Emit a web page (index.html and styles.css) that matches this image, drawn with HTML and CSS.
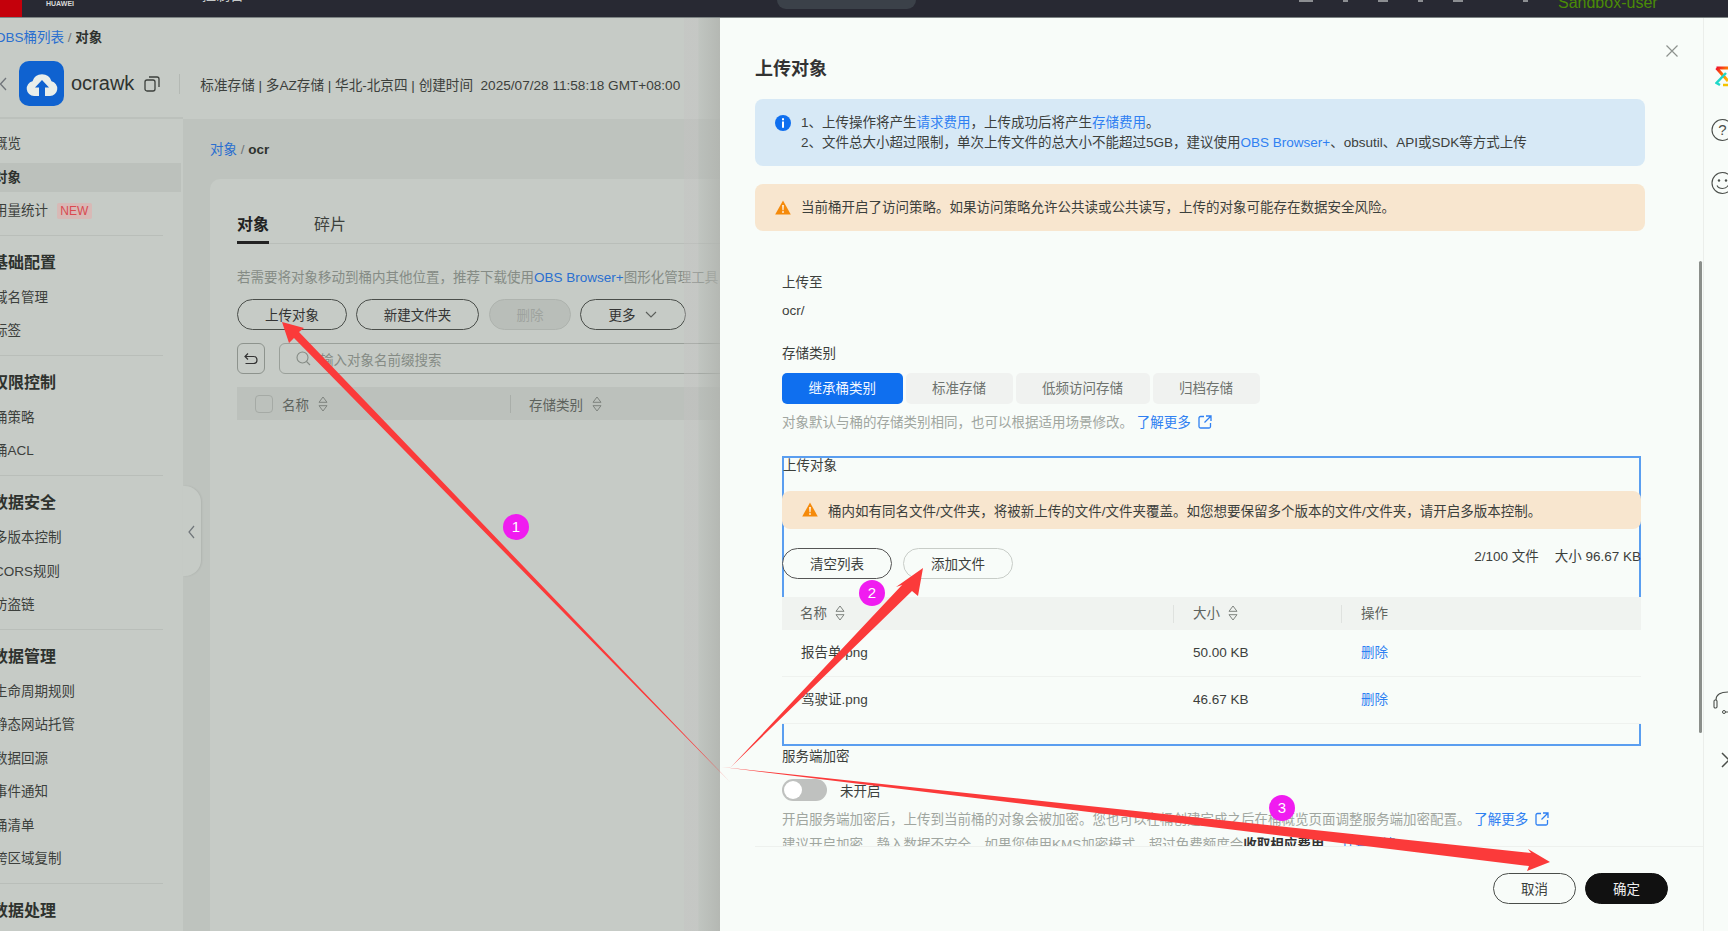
FILE: index.html
```html
<!DOCTYPE html>
<html>
  <head>
    <meta name="viewport" content="width=device-width,initial-scale=1.0">
    <title>上传对象</title>
    <link rel="stylesheet" href="styles.css">
  </head>
  <body>
    <svg class="defs" width="0" height="0">
      <symbol id="sort" viewBox="0 0 10 16">
        <path d="M5 1 9 6.300H1Z M1 9.700H9L5 15Z" fill="none" stroke="currentColor" stroke-width="1" stroke-linejoin="round"/>
      </symbol>
      <symbol id="ext" viewBox="0 0 14 14">
        <path d="M6 1.5H2.5A1.5 1.5 0 0 0 1 3V11.5A1.5 1.5 0 0 0 2.5 13H11A1.5 1.5 0 0 0 12.500 11.5V8M8 1H13V6M13 1 6.500 7.500" fill="none" stroke="currentColor" stroke-width="1.300"/>
      </symbol>
      <symbol id="warn" viewBox="0 0 16 15">
        <path d="M8 .5 15.800 14.500H.2Z" fill="#f58a0b"/>
        <path d="M7.200 5H8.800L8.500 10.300H7.500ZM7.200 11.300H8.800V12.800H7.200Z" fill="#fff"/>
      </symbol>
    </svg>

    <header class="topbar">
      <div class="brand-red"></div>
      <span class="brand-name">HUAWEI</span>
      <span class="top-nav">控制台</span>
      <div class="top-search"></div>
      <div class="top-tools">
        <i class="tick wide"></i><i class="tick"></i><i class="tick mid"></i><i class="tick"></i><i class="tick mid"></i><i class="tick far"></i>
      </div>
      <span class="top-user">Sandbox-user</span>
    </header>

    <div class="main">
      <div class="console">
        <div class="crumbs"><a>OBS桶列表</a> <span class="slash">/</span> <b>对象</b></div>
        <div class="bucket">
          <svg class="back" width="8" height="14" viewBox="0 0 8 14"><path d="M7 1 1.500 7 7 13" fill="none" stroke="currentColor" stroke-width="1.300"/></svg>
          <div class="bucket-logo">
            <svg width="32" height="26" viewBox="0 0 32 26">
              <path d="M8 25A7.500 7.500 0 0 1 6.500 10.200 10 10 0 0 1 25.500 10.200 7.500 7.500 0 0 1 24 25Z" fill="#e9eeea"/>
              <path d="M16 9 23 16.500H19V25H13V16.500H9Z" fill="#0f62d0"/>
            </svg>
          </div>
          <span class="bucket-name">ocrawk</span>
          <svg class="copy" width="16" height="16" viewBox="0 0 16 16"><rect x="1" y="4" width="10" height="11" rx="2" fill="none" stroke="currentColor" stroke-width="1.300"/><path d="M5 1H13A2 2 0 0 1 15 3V11" fill="none" stroke="currentColor" stroke-width="1.300"/></svg>
          <span class="bucket-sep"></span>
          <span class="bucket-meta">标准存储 | 多AZ存储 | 华北-北京四 | 创建时间&nbsp; 2025/07/28 11:58:18 GMT+08:00</span>
        </div>

        <div class="workspace">
          <nav class="sidebar">
            <div class="nav-group first">
              <a class="nav-item">概览</a>
              <a class="nav-item active">对象</a>
              <a class="nav-item">用量统计 <span class="new">NEW</span></a>
            </div>
            <div class="nav-group">
              <h4>基础配置</h4>
              <a class="nav-item">域名管理</a>
              <a class="nav-item">标签</a>
            </div>
            <div class="nav-group">
              <h4>权限控制</h4>
              <a class="nav-item">桶策略</a>
              <a class="nav-item">桶ACL</a>
            </div>
            <div class="nav-group">
              <h4>数据安全</h4>
              <a class="nav-item">多版本控制</a>
              <a class="nav-item">CORS规则</a>
              <a class="nav-item">防盗链</a>
            </div>
            <div class="nav-group">
              <h4>数据管理</h4>
              <a class="nav-item">生命周期规则</a>
              <a class="nav-item">静态网站托管</a>
              <a class="nav-item">数据回源</a>
              <a class="nav-item">事件通知</a>
              <a class="nav-item">桶清单</a>
              <a class="nav-item">跨区域复制</a>
            </div>
            <div class="nav-group last">
              <h4>数据处理</h4>
            </div>
            <div class="collapse">
              <svg width="7" height="14" viewBox="0 0 7 14"><path d="M6 1 1 7 6 13" fill="none" stroke="currentColor" stroke-width="1.200"/></svg>
            </div>
          </nav>

          <section class="content">
            <div class="content-crumbs"><a>对象</a> <span class="slash">/</span> <b>ocr</b></div>
            <div class="card">
              <div class="tabs">
                <span class="tab on">对象</span>
                <span class="tab">碎片</span>
              </div>
              <p class="hint">若需要将对象移动到桶内其他位置，推荐下载使用<a>OBS Browser+</a>图形化管理工具，</p>
              <div class="actions">
                <button class="btn upload">上传对象</button>
                <button class="btn folder">新建文件夹</button>
                <button class="btn off">删除</button>
                <button class="btn more">更多
                  <svg width="12" height="7" viewBox="0 0 12 7"><path d="M1 1 6 6 11 1" fill="none" stroke="currentColor" stroke-width="1.100"/></svg>
                </button>
              </div>
              <div class="search-row">
                <button class="undo">
                  <svg width="14" height="14" viewBox="0 0 14 14"><path d="M4 1.500 1 4.500 4 7.500M1 4.500H9.500A3.500 3.500 0 0 1 9.500 11.500H1.500" fill="none" stroke="currentColor" stroke-width="1.200"/></svg>
                </button>
                <div class="search">
                  <svg width="15" height="15" viewBox="0 0 15 15"><circle cx="6.500" cy="6.500" r="5.500" fill="none" stroke="currentColor" stroke-width="1.100"/><path d="M10.500 10.500 14 14" stroke="currentColor" stroke-width="1.100"/></svg>
                  <span>输入对象名前缀搜索</span>
                </div>
              </div>
              <div class="obj-head">
                <span class="check"></span>
                <span class="obj-name">名称</span>
                <svg class="sort" width="10" height="16"><use href="#sort"/></svg>
                <span class="obj-sep"></span>
                <span>存储类别</span>
                <svg class="sort" width="10" height="16"><use href="#sort"/></svg>
              </div>
            </div>
          </section>
        </div>
      </div>

      <aside class="drawer">
        <div class="drawer-main">
          <svg class="close" width="12" height="12" viewBox="0 0 12 12"><path d="M.5 .5 11.500 11.500M11.500 .5 .5 11.500" stroke="currentColor" stroke-width="1.200"/></svg>
          <div class="drawer-body">
            <h2>上传对象</h2>
            <div class="alert info">
              <svg class="alert-icon" width="16" height="16" viewBox="0 0 16 16"><circle cx="8" cy="8" r="8" fill="#0f6fef"/><path d="M7 3.200H9V5.200H7ZM7 6.500H9V12.800H7Z" fill="#fff"/></svg>
              <div>
                <div>1、上传操作将产生<a>请求费用</a>，上传成功后将产生<a>存储费用</a>。</div>
                <div>2、文件总大小超过限制，单次上传文件的总大小不能超过5GB，建议使用<a>OBS Browser+</a>、obsutil、API或SDK等方式上传</div>
              </div>
            </div>
            <div class="alert warning">
              <svg class="alert-icon" width="16" height="15"><use href="#warn"/></svg>
              <div>当前桶开启了访问策略。如果访问策略允许公共读或公共读写，上传的对象可能存在数据安全风险。</div>
            </div>

            <div class="form">
              <div class="label first">上传至</div>
              <div class="value">ocr/</div>
              <div class="label gap">存储类别</div>
              <div class="segments">
                <span class="seg on">继承桶类别</span>
                <span class="seg">标准存储</span>
                <span class="seg">低频访问存储</span>
                <span class="seg">归档存储</span>
              </div>
              <div class="help">对象默认与桶的存储类别相同，也可以根据适用场景修改。 <a class="more-link">了解更多 <svg width="14" height="14"><use href="#ext"/></svg></a></div>

              <div class="upload-box">
                <div class="box-title">上传对象</div>
                <div class="box-warning">
                  <svg width="16" height="15"><use href="#warn"/></svg>
                  <span>桶内如有同名文件/文件夹，将被新上传的文件/文件夹覆盖。如您想要保留多个版本的文件/文件夹，请开启多版本控制。</span>
                </div>
                <div class="box-tools">
                  <button class="btn light clear">清空列表</button>
                  <button class="btn light add">添加文件</button>
                  <div class="stats"><span>2/100 文件</span><span>大小 96.67 KB</span></div>
                </div>
                <div class="files">
                  <div class="file-row head">
                    <div>名称 <svg class="sort" width="10" height="16"><use href="#sort"/></svg></div>
                    <div>大小 <svg class="sort" width="10" height="16"><use href="#sort"/></svg></div>
                    <div>操作</div>
                  </div>
                  <div class="file-row">
                    <div>报告单.png</div>
                    <div>50.00 KB</div>
                    <div><a>删除</a></div>
                  </div>
                  <div class="file-row">
                    <div>驾驶证.png</div>
                    <div>46.67 KB</div>
                    <div><a>删除</a></div>
                  </div>
                </div>
              </div>

              <div class="label enc">服务端加密</div>
              <div class="switch-row">
                <span class="switch"></span>
                <span>未开启</span>
              </div>
              <div class="help enc-help">开启服务端加密后，上传到当前桶的对象会被加密。您也可以在桶创建完成之后在桶概览页面调整服务端加密配置。 <a class="more-link">了解更多 <svg width="14" height="14"><use href="#ext"/></svg></a></div>
              <div class="help cut">建议开启加密，静入数据不安全。如果您使用KMS加密模式，超过免费额度会<b>收取相应费用</b>。 <a>计费详情</a></div>
            </div>
          </div>
          <footer class="drawer-foot">
            <button class="btn light cancel">取消</button>
            <button class="btn ok">确定</button>
          </footer>
          <div class="scroll-thumb"></div>
        </div>

        <div class="rail">
          <svg class="rail-logo" width="13" height="21" viewBox="0 0 13 21">
            <defs><linearGradient id="rb" x1="0" y1="0" x2="1" y2="1"><stop offset="0" stop-color="#f0102a"/><stop offset=".5" stop-color="#ff7a00"/><stop offset="1" stop-color="#ffc400"/></linearGradient></defs>
            <path d="M1.500 2H13M1.500 2 13 15" fill="none" stroke="url(#rb)" stroke-width="3"/>
            <path d="M11 7 1.500 17 5 19" fill="none" stroke="#1fd8c8" stroke-width="2.500"/>
            <path d="M8 19H13" stroke="#f5c400" stroke-width="2.500"/>
          </svg>
          <svg class="rail-help" width="18" height="24" viewBox="0 0 18 24"><circle cx="11.500" cy="12" r="10.500" fill="none" stroke="currentColor" stroke-width="1.100"/><text x="11.500" y="17" text-anchor="middle" class="q">?</text></svg>
          <svg class="rail-smile" width="18" height="24" viewBox="0 0 18 24"><circle cx="11.500" cy="12" r="10.500" fill="none" stroke="currentColor" stroke-width="1.100"/><circle cx="8" cy="9.500" r="1.200" fill="currentColor"/><circle cx="15" cy="9.500" r="1.200" fill="currentColor"/><path d="M6 14.500C8 18.500 15 18.500 17 14.500" fill="none" stroke="currentColor" stroke-width="1.100"/></svg>
          <svg class="rail-phone" width="16" height="24" viewBox="0 0 16 24"><path d="M3 10C3 4 8 2 16 2" fill="none" stroke="currentColor" stroke-width="1.100"/><rect x="1" y="10" width="3" height="8" rx="1.200" fill="none" stroke="currentColor" stroke-width="1.100"/><circle cx="11" cy="22" r="1.500" fill="none" stroke="currentColor"/><path d="M12.500 22H16" stroke="currentColor"/></svg>
          <svg class="rail-next" width="9" height="16" viewBox="0 0 9 16"><path d="M1 1 8 8 1 15" fill="none" stroke="currentColor" stroke-width="1.500"/></svg>
        </div>
      </aside>
    </div>

    <!-- annotations drawn over the screenshot -->
    <svg class="marks" width="1728" height="931" viewBox="0 0 1728 931">
      <g fill="#fb3a3a">
        <polygon points="282,322 304,328 299,332 730,782 294,338 289,343"/>
        <polygon points="923,568 918,596 912,591 731,767 902,585 896,587"/>
        <polygon points="1550,862 1527,871 1529,866 722,767 1531,853 1528,849"/>
      </g>
      <g fill="#f01cf0">
        <circle cx="516" cy="527" r="13"/>
        <circle cx="872" cy="593" r="13"/>
        <circle cx="1282" cy="808" r="13"/>
      </g>
      <g class="mark-num" fill="#fff" text-anchor="middle">
        <text x="516" y="532">1</text>
        <text x="872" y="598">2</text>
        <text x="1282" y="813">3</text>
      </g>
    </svg>
  </body>
</html>
```

FILE: styles.css
```css
* { box-sizing: border-box; }
html, body {
  margin: 0;
  height: 931px;
  overflow: hidden;
}
body {
  position: relative;
  font-family: "Liberation Sans", "Noto Sans CJK SC", sans-serif;
  font-size: 13.500px;
  color: #3c403c;
  background: #c6cbc6;
}
a { color: inherit; text-decoration: none; }
button { font-family: inherit; font-size: 13.500px; }
h2, h4, p { margin: 0; }
.defs { position: absolute; }

/* top bar */
.topbar {
  display: flex;
  height: 18px;
  background: #282933;
  border-bottom: 1px solid #7d8484;
  overflow: hidden;
}
.brand-red { width: 22px; height: 18px; background: #c4000b; }
.brand-name {
  width: 30px;
  margin-left: 24px;
  font-size: 7px;
  font-weight: bold;
  line-height: 8px;
  color: #d9d9d9;
}
.top-nav {
  margin: -12px 0 0 126px;
  width: 46px;
  font-size: 14px;
  line-height: 14px;
  color: #c4c8c8;
}
.top-search {
  width: 139px;
  height: 9px;
  margin-left: 529px;
  background: #3b4149;
  border-radius: 0 0 16px 16px;
}
.top-tools {
  display: flex;
  gap: 30px;
  width: 350px;
  margin-left: 383px;
}
.tick { display: block; width: 5px; height: 2px; background: #8c8e92; }
.tick.wide { width: 14px; }
.tick.mid { width: 10px; }
.tick.far { margin-left: 30px; }
.top-user {
  margin: -5px 0 0 -91px;
  font-size: 16px;
  line-height: 16px;
  color: #4a8c06;
}

.main { display: flex; height: 913px; }

/* console behind the drawer */
.console {
  position: relative;
  flex: none;
  width: 720px;
  overflow: hidden;
}
.console::after {
  content: "";
  position: absolute;
  top: 0;
  right: 0;
  bottom: 0;
  width: 36px;
  background: linear-gradient(90deg, rgba(196, 194, 194, .4), rgba(196, 194, 194, .4) 38%, rgba(180, 184, 180, .35) 42%, rgba(176, 179, 174, .8));
  pointer-events: none;
}
.crumbs {
  height: 38px;
  line-height: 39px;
  margin-left: -5px;
  white-space: nowrap;
}
.crumbs a { color: #2a6fd0; }
.crumbs b, .content-crumbs b { font-weight: bold; color: #2e322e; }
.slash { color: #70767a; }
.bucket {
  display: flex;
  align-items: center;
  height: 63px;
  padding-bottom: 8px;
  white-space: nowrap;
}
.back { margin-right: 12px; color: #70757a; margin-left: -1px; }
.bucket-logo {
  display: flex;
  align-items: center;
  justify-content: center;
  width: 45px;
  height: 45px;
  background: #0f62d0;
  border-radius: 10px;
}
.bucket-name { margin-left: 7px; font-size: 20px; color: #2f332f; }
.copy { margin-left: 10px; color: #3c403c; }
.bucket-sep { width: 1px; height: 20px; margin-left: 19px; background: #b4b9b4; }
.bucket-meta { margin-left: 20px; font-size: 13.600px; color: #3c403c; }

.workspace { display: flex; height: 812px; }

/* left menu */
.sidebar {
  position: relative;
  flex: none;
  width: 183px;
  padding-right: 20px;
  box-shadow: 0 -2px 0 #bcc1bc;
}
.nav-group {
  margin-left: -8px;
  padding: 15px 0 9.600px;
  border-bottom: 1px solid #b9beb9;
}
.nav-group.first { padding-top: 10px; }
.nav-group.last { border: 0; }
.nav-group h4 {
  height: 24px;
  margin-bottom: 8px;
  padding-left: 0;
  font-size: 16px;
  line-height: 24px;
  font-weight: bold;
  color: #2e322e;
  white-space: nowrap;
}
.nav-item {
  display: block;
  height: 29px;
  margin: 0 -18px 4.550px 0;
  padding-left: 2px;
  line-height: 29px;
  white-space: nowrap;
}
.nav-item:last-child { margin-bottom: 0; }
.nav-item.active { background: #bcc1bc; font-weight: bold; color: #2e322e; }
.new {
  display: inline-block;
  margin-left: 5px;
  padding: 0 3.500px;
  font-size: 12px;
  line-height: 16px;
  color: #d94a50;
  background: #d8b9b6;
  border-radius: 2px;
}
.collapse {
  position: absolute;
  top: 367px;
  left: 183px;
  display: flex;
  align-items: center;
  width: 18px;
  height: 90px;
  padding: 2px 0 0 5px;
  color: #70767a;
  background: #c6cbc6;
  border-radius: 0 16px 16px 0;
  box-shadow: 1px 0 2px rgba(0, 0, 0, .08);
}

/* main content */
.content {
  flex: 1;
  min-width: 0;
  padding: 0 0 0 27px;
  background: #bec3be;
}
.content-crumbs { height: 60px; line-height: 62px; color: #2e322e; white-space: nowrap; }
.content-crumbs a { color: #2a6fd0; }
.card {
  height: 752px;
  margin-right: -100px;
  padding: 28px 0 0 27px;
  background: #c6cbc6;
  border-radius: 10px 0 0 0;
}
.tabs {
  display: flex;
  gap: 45px;
  height: 37px;
  border-bottom: 1px solid #b9beb9;
}
.tab {
  height: 37px;
  font-size: 16px;
  line-height: 36px;
  color: #3c403c;
}
.tab.on { font-weight: bold; color: #222; border-bottom: 3px solid #222; }
.hint {
  margin-top: 24px;
  line-height: 20px;
  color: #858b85;
  white-space: nowrap;
}
.hint a { color: #2a6fd0; }
.btn {
  height: 31px;
  padding: 0 0 2px;
  color: #333;
  background: transparent;
  border: 1.500px solid #4a4e4a;
  border-radius: 16px;
}
.actions { display: flex; gap: 9px; margin-top: 11px; }
.upload { width: 110px; }
.folder { width: 123px; margin-right: 1px; }
.off { width: 82px; color: #9ea39e; background: #b9beb9; border-color: #aeb3ae; }
.more { width: 106px; }
.more svg { margin-left: 6px; vertical-align: 2px; color: #5a5e5a; }
.search-row { display: flex; gap: 14px; margin-top: 13px; }
.undo {
  display: flex;
  align-items: center;
  justify-content: center;
  width: 31px;
  height: 31px;
  padding: 0;
  color: #333;
  background: transparent;
  border: 1px solid #8d938d;
  border-radius: 6px;
}
.search {
  display: flex;
  align-items: center;
  gap: 9px;
  width: 600px;
  height: 31px;
  padding-left: 16px;
  color: #858b85;
  border: 1px solid #9aa09a;
  border-radius: 6px;
}
.obj-head {
  display: flex;
  align-items: center;
  height: 33px;
  margin-top: 13px;
  padding-left: 18px;
  color: #5e635e;
  background: #bcc1bc;
  white-space: nowrap;
}
.check {
  width: 18px;
  height: 18px;
  margin-right: 9px;
  border: 1px solid #a5aaa5;
  border-radius: 4px;
}
.sort { flex: none; color: #7e837e; }
.obj-head .sort { margin-left: 9px; }
.obj-sep { width: 1px; height: 18px; margin: 0 18px 0 182px; background: #a9aea9; }

/* upload drawer */
.drawer {
  flex: none;
  display: flex;
  width: 1008px;
  background: #f8fcf9;
}
.drawer-main {
  position: relative;
  display: flex;
  flex-direction: column;
  width: 983px;
}
.close { position: absolute; top: 27px; left: 946px; color: #8d928f; }
.drawer-body {
  flex: none;
  height: 828px;
  padding: 38px 58px 0 35px;
  overflow: hidden;
}
.drawer-body h2 {
  font-size: 18px;
  font-weight: bold;
  line-height: 26px;
  height: 24px;
  color: #333;
}
.alert {
  display: flex;
  gap: 10px;
  padding: 0 20px;
  line-height: 20px;
  border-radius: 8px;
}
.alert a { color: #2f80f2; }
.alert.info { height: 67px; margin-top: 19px; padding-top: 14px; background: #d7e9f6; }
.alert.warning { align-items: center; height: 47px; margin-top: 18px; background: #f8e6cf; }
.alert-icon { flex: none; }
.alert.info .alert-icon { margin-top: 2px; }
.form { padding: 41px 4px 0 27px; }
.label, .value { line-height: 20px; color: #3c403c; }
.value { margin-top: 9px; }
.label.first { line-height: 22px; height: 20px; }
.label.gap { margin-top: 23px; }
.segments { display: flex; gap: 3px; margin-top: 9px; }
.seg {
  height: 31px;
  padding: 0 26.500px;
  line-height: 31px;
  color: #6e736e;
  background: #f0f2f0;
  border-radius: 5px;
}
.seg.on { color: #f2f7ff; background: #0f6fef; }
.help { margin-top: 9px; line-height: 20px; color: #a0a6a0; white-space: nowrap; }
.help:first-of-type { line-height: 21px; }
.more-link { color: #2f80f2; }
.more-link svg { margin-left: 3px; vertical-align: -2px; }
.upload-box {
  margin-top: 23px;
  padding-bottom: 22px;
  box-shadow: inset 0 0 0 2px #5a9ef0;
}
.box-title { padding-left: 1px; line-height: 20px; }
.box-warning {
  display: flex;
  align-items: center;
  gap: 10px;
  height: 38px;
  margin-top: 15px;
  padding: 0 0 1px 20px;
  font-size: 13.500px;
  background: #f8e6cf;
  border-radius: 8px;
}
.box-tools { display: flex; margin-top: 19px; }
.btn.light { width: 110px; background: #f8fcf9; color: #3c403c; }
.clear { border-color: #555; }
.add { margin-left: 11px; border-color: #c8cdc8; border-width: 1px; }
.stats {
  display: flex;
  gap: 16px;
  margin-left: auto;
  height: 16px;
  line-height: 18px;
  white-space: nowrap;
}
.files { margin-top: 18px; background: #f8fcf9; }
.file-row {
  display: grid;
  grid-template-columns: 391px 168px 1fr;
  height: 47px;
  line-height: 46px;
  border-bottom: 1px solid #eff2ef;
}
.file-row > div { padding-left: 19px; }
.file-row > div + div { padding-left: 20px; }
.file-row a { color: #2f80f2; }
.file-row.head { height: 33px; line-height: 31px; color: #5e635e; background: #f0f3f0; border: 0; }
.file-row.head > div { display: flex; align-items: center; gap: 8px; padding: 0 0 1px 18px; }
.file-row.head > div + div { padding-left: 19px; border-left: 1px solid transparent; background: linear-gradient(#dfe2df, #dfe2df) no-repeat 0 50% / 1px 18px; background-origin: border-box; }
.label.enc { margin-top: 1px; }
.switch-row {
  display: flex;
  align-items: center;
  gap: 13px;
  margin-top: 12px;
}
.switch {
  position: relative;
  width: 45px;
  height: 22px;
  background: #bfc1bf;
  border-radius: 11px;
}
.switch::after {
  content: "";
  position: absolute;
  top: 2px;
  left: 2px;
  width: 18px;
  height: 18px;
  background: #fff;
  border-radius: 50%;
}
.enc-help { margin-top: 9px; }
.help.cut { margin-top: 5px; }
.help.cut b { color: #333; }
.help.cut a { color: #2f80f2; }
.drawer-foot {
  display: flex;
  justify-content: flex-end;
  gap: 9px;
  height: 85px;
  margin-left: 35px;
  padding: 26px 35px 0 0;
  border-top: 1px solid #eef1ee;
}
.btn.light.cancel { width: 83px; }
.btn.ok { width: 83px; color: #eee; background: #111; border-color: #111; }
.scroll-thumb {
  position: absolute;
  top: 243px;
  left: 979px;
  width: 3px;
  height: 472px;
  background: #8b8f8b;
  border-radius: 2px;
}

/* right rail */
.rail {
  position: relative;
  flex: 1;
  border-left: 1px solid #ebeeeb;
  overflow: hidden;
  color: #4a4e4a;
}
.rail svg { position: absolute; }
.rail-logo { top: 48px; left: 11px; }
.rail-help { top: 100px; left: 7px; }
.rail-smile { top: 153px; left: 7px; }
.rail-phone { top: 672px; left: 9px; }
.rail-next { top: 734px; left: 17px; }
.q { font-size: 15px; fill: #4a4e4a; }

/* red arrows and numbered badges */
.marks { position: absolute; top: 0; left: 0; pointer-events: none; }
.mark-num { font-size: 15px; }
```
